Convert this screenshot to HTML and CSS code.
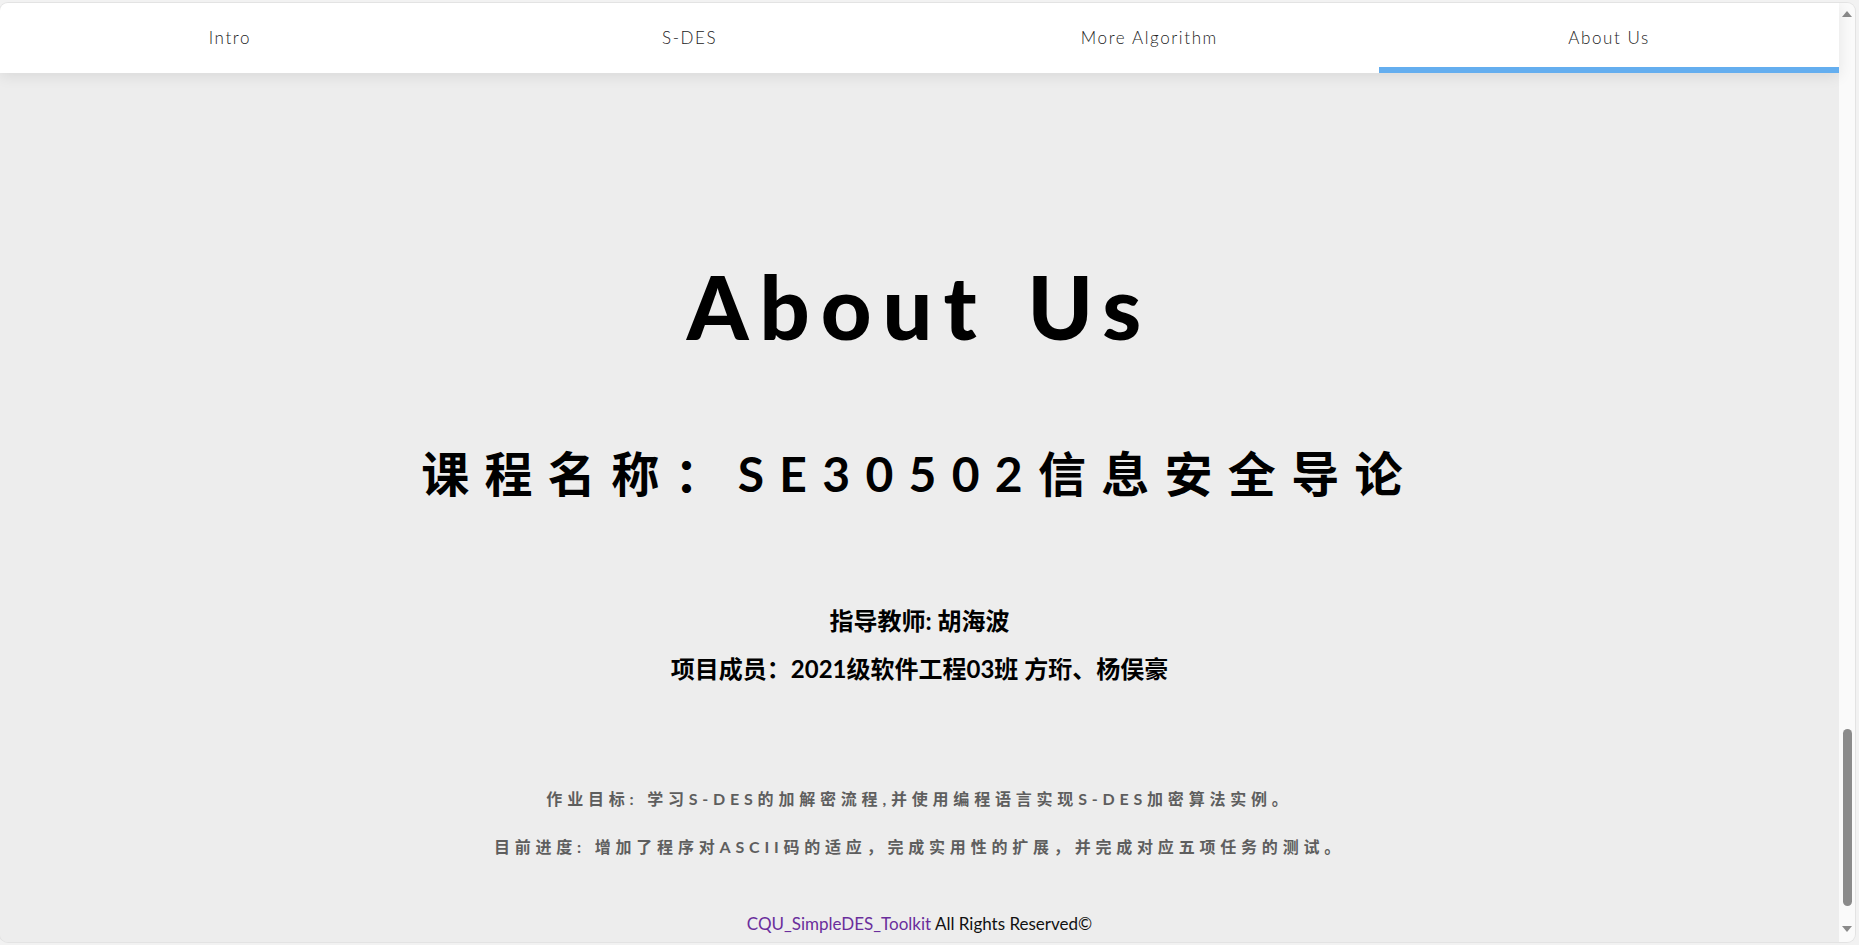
FILE: index.html
```html
<!DOCTYPE html>
<html lang="zh-CN">
<head>
<meta charset="utf-8">
<title>About Us</title>
<link rel="stylesheet" href="styles.css">
</head>
<body>
<div class="window">
  <div class="page">
    <nav class="nav">
      <a class="tab">Intro</a>
      <a class="tab">S-DES</a>
      <a class="tab">More Algorithm</a>
      <a class="tab active">About Us</a>
    </nav>
    <main class="main">
      <h1 class="title">About Us</h1>
      <h2 class="course">课程名称：SE30502信息安全导论</h2>
      <div class="people">
        <p>指导教师: 胡海波</p>
        <p>项目成员：2021级软件工程03班 方珩、杨俣豪</p>
      </div>
      <div class="notes">
        <p>作业目标: 学习S-DES的加解密流程,并使用编程语言实现S-DES加密算法实例。</p>
        <p>目前进度: 增加了程序对ASCII码的适应，完成实用性的扩展，并完成对应五项任务的测试。</p>
      </div>
      <footer class="footer"><a class="link" href="#">CQU_SimpleDES_Toolkit</a> All Rights Reserved©</footer>
    </main>
  </div>
  <div class="scrollbar">
    <span class="arrow up"></span>
    <div class="track"><span class="thumb"></span></div>
    <span class="arrow down"></span>
  </div>
</div>
</body>
</html>
```

FILE: styles.css
```css
html, body {
  margin: 0;
  padding: 0;
  height: 100%;
  overflow: hidden;
  background: #f2f2f2;
}

.window {
  display: flex;
  width: 1855px;
  height: 939px;
  margin-top: 3px;
  border-radius: 8px;
  overflow: hidden;
  box-shadow: 0 0 0 1px #e3e3e3;
  background: #ededed;
}

.page {
  flex: 1;
  display: flex;
  flex-direction: column;
  background: #ededed;
  font-family: "Lato", "Noto Sans CJK SC", sans-serif;
}

.nav {
  display: flex;
  height: 70px;
  background: #ffffff;
  box-shadow: 0 3px 14px rgba(0, 0, 0, 0.09);
  position: relative;
  z-index: 1;
}

.tab {
  flex: 1;
  text-align: center;
  line-height: 70px;
  font-size: 17px;
  font-weight: 300;
  letter-spacing: 1.6px;
  color: #222;
}

.tab.active {
  box-shadow: inset 0 -6px 0 #64aeef;
}

.main {
  display: flex;
  flex-direction: column;
  align-items: center;
  text-align: center;
}

.title {
  margin: 183px 0 0;
  font-size: 88px;
  line-height: 100px;
  font-weight: 900;
  letter-spacing: 11px;
  word-spacing: 8px;
  color: #000;
}

.course {
  margin: 88px 0 0;
  font-size: 48px;
  line-height: 60px;
  font-weight: 700;
  letter-spacing: 15.3px;
  color: #000;
}

.people {
  margin-top: 93px;
}

.people p {
  margin: 0;
  font-size: 24px;
  line-height: 48px;
  font-weight: 700;
  color: #000;
}

.notes {
  margin-top: 82px;
}

.notes p {
  margin: 0;
  font-size: 16px;
  line-height: 48px;
  font-weight: 700;
  letter-spacing: 4.8px;
  color: #5e5e5e;
}

.footer {
  margin-top: 41px;
  font-size: 17px;
  line-height: 24px;
  color: #111;
}

.link {
  color: #6a2e9c;
  text-decoration: none;
}

.scrollbar {
  width: 16px;
  display: flex;
  flex-direction: column;
  align-items: center;
  background: #fafafa;
}

.arrow {
  width: 0;
  height: 0;
  border-left: 5px solid transparent;
  border-right: 5px solid transparent;
}

.arrow.up {
  margin-top: 8px;
  border-bottom: 6px solid #8a8a8a;
}

.arrow.down {
  margin: 0 0 10px;
  border-top: 6px solid #8a8a8a;
}

.track {
  flex: 1;
  width: 100%;
  display: flex;
  flex-direction: column;
  justify-content: flex-end;
  align-items: center;
  padding-bottom: 20px;
}

.thumb {
  width: 9px;
  height: 177px;
  border-radius: 5px;
  background: #8b8b8b;
}
```
